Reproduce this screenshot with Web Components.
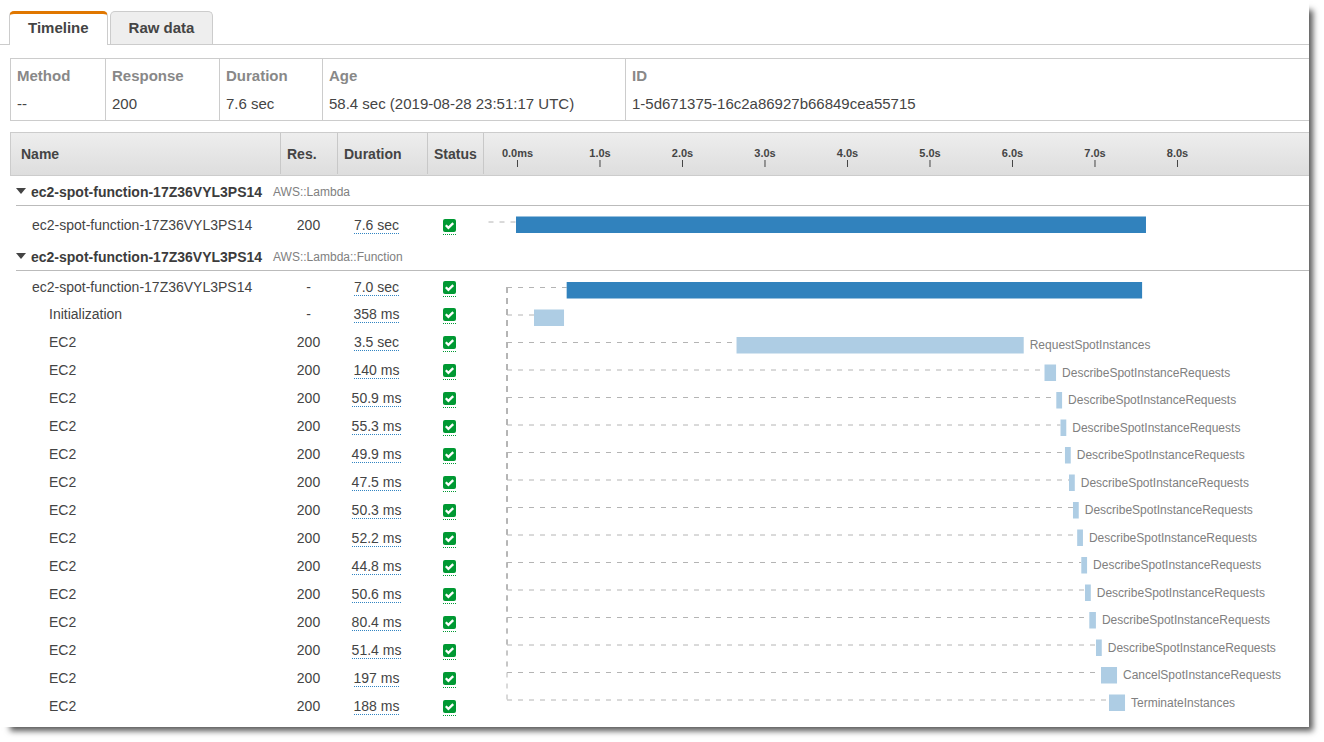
<!DOCTYPE html>
<html lang="en">
<head>
<meta charset="utf-8">
<title>Trace timeline</title>
<style>
  body { margin: 0; background: #fff; color: #444; font-family: "Liberation Sans", Arial, sans-serif; font-size: 14px; line-height: 16px; }
</style>
</head>
<body>
<trace-panel>
  <tab-strip>
    <tab-item selected>Timeline</tab-item>
    <tab-item>Raw data</tab-item>
  </tab-strip>
  <trace-summary></trace-summary>
  <trace-timeline></trace-timeline>
</trace-panel>

<script>
const shadow = (el, html) => { el.attachShadow({ mode: "open" }).innerHTML = html; return el.shadowRoot; };

customElements.define("trace-panel", class extends HTMLElement {
  constructor() {
    super();
    shadow(this, `<style>
      :host { display: block; margin: 0 15px 15px 0; padding: 11px 0 7px; background: #fff;
              box-shadow: 7px 7px 6px -3px rgba(0,0,0,.65); }
    </style><slot></slot>`);
  }
});

customElements.define("tab-strip", class extends HTMLElement {
  constructor() {
    super();
    shadow(this, `<style>
      :host { display: flex; gap: 2px; padding-left: 9px; height: 33px; border-bottom: 1px solid #ccc; }
    </style><slot></slot>`);
    this.setAttribute("role", "tablist");
    this.addEventListener("click", e => {
      const hit = e.target.closest("tab-item");
      if (hit) for (const t of this.children) t.toggleAttribute("selected", t === hit);
    });
  }
});

customElements.define("tab-item", class extends HTMLElement {
  static observedAttributes = ["selected"];
  constructor() {
    super();
    shadow(this, `<style>
      :host { display: block; }
      button { box-sizing: border-box; height: 33px; margin: 0; padding: 0 18px; display: block; font: bold 15px/16px "Liberation Sans", Arial, sans-serif;
               color: #444; background: #eee; border: 1px solid #ccc; border-bottom: 0; border-radius: 5px 5px 0 0; cursor: pointer; }
      :host([selected]) button { height: 34px; background: #fff; border-top: 3px solid #e07700; padding: 0 18px 4px; }
    </style><button role="tab"><slot></slot></button>`);
  }
  attributeChangedCallback() {
    this.shadowRoot.querySelector("button").setAttribute("aria-selected", this.hasAttribute("selected"));
  }
});

customElements.define("trace-summary", class extends HTMLElement {
  constructor() {
    super();
    shadow(this, `<style>
      :host { display: block; margin: 13px 0 11px 10px; border: 1px solid #ccc; border-right: 0; }
      table { width: 100%; table-layout: fixed; border-collapse: separate; border-spacing: 0; font-size: 15px; line-height: 17px; }
      th, td { box-sizing: border-box; text-align: left; padding: 0 6px; border-right: 1px solid #ccc; white-space: nowrap; }
      th:last-child, td:last-child { border-right: 0; }
      th { color: #888; padding-top: 8px; }
      td { padding-top: 11px; padding-bottom: 8px; }
      .method { width: 95px; } .response { width: 114px; } .duration { width: 103px; } .age { width: 303px; }
    </style>
    <table>
      <colgroup><col class="method"><col class="response"><col class="duration"><col class="age"><col></colgroup>
      <thead><tr><th scope="col">Method</th><th scope="col">Response</th><th scope="col">Duration</th><th scope="col">Age</th><th scope="col">ID</th></tr></thead>
      <tbody><tr><td>--</td><td>200</td><td>7.6 sec</td><td>58.4 sec (2019-08-28 23:51:17 UTC)</td><td>1-5d671375-16c2a86927b66849cea55715</td></tr></tbody>
    </table>`);
  }
});

customElements.define("status-ok", class extends HTMLElement {
  constructor() {
    super();
    shadow(this, `<style>
      :host { display: inline-block; vertical-align: top; margin-top: 2px; padding-bottom: 2px; border-bottom: 1px dotted #093; }
      svg { display: block; }
    </style>
    <svg width="13" height="13" viewBox="0 0 13 13" role="img" aria-label="OK">
      <rect width="13" height="13" rx="2" fill="#093"/>
      <path d="M2.8 6.3 5.4 8.9 10.2 4.1" fill="none" stroke="#fff" stroke-width="2.3"/>
    </svg>`);
  }
});

/* Horizontal scale of the chart: 4% of the width lies before zero, one second takes 10%. */
const at = s => (4 + s * 10) + "%";

customElements.define("time-axis", class extends HTMLElement {
  constructor() {
    super();
    let marks = "";
    for (let s = 0; s <= 8; s++) {
      const x = at(s + .006);
      marks += `<text x="${x}" y="24" text-anchor="middle">${s ? s + ".0s" : "0.0ms"}</text>
                <line x1="${x}" x2="${x}" y1="27" y2="34"/>`;
    }
    shadow(this, `<style>
      :host { display: block; }
      svg { display: block; width: 100%; height: 42px; }
      text { font: bold 11px "Liberation Sans", Arial, sans-serif; fill: #444; }
      line { stroke: #444; }
    </style><svg>${marks}</svg>`);
  }
});

/* Spans arrive as [start, length, kind, label]; every lane is 27.5 units high. */
customElements.define("span-chart", class extends HTMLElement {
  set spans(list) {
    const root = this.hasAttribute("root");
    const lane = 55 / 2, first = root ? 16 : 16.5, left = root ? 4.5 : 23, top = root ? 10.5 : 11;
    let out = "";
    list.forEach(([start, length, kind, label], i) => {
      const y = first + i * lane;
      if (i) out += `<line x1="${left}" x2="${left}" y1="${first}" y2="${y}"/>`;
      out += `<line x1="${left}" x2="${at(start)}" y1="${y}" y2="${y}"/>
              <rect class="${kind}" x="${at(start)}" y="${top + i * lane}" width="${length * 10}%" height="16.5"/>`;
      if (label) out += `<text x="${at(start + length)}" dx="6" y="${Math.round(top + i * lane + 12)}">${label}</text>`;
    });
    this.shadowRoot.querySelector("svg").innerHTML = out;
  }
  constructor() {
    super();
    shadow(this, `<style>
      :host { display: block; }
      svg { display: block; width: 100%; height: 449px; }
      :host([root]) svg { height: 35px; }
      line { stroke: #b4b4b4; stroke-dasharray: 5 6; }
      .main { fill: #3182bd; } .sub { fill: #aecde4; }
      text { font: 12px "Liberation Sans", Arial, sans-serif; fill: #808080; }
    </style><svg></svg>`);
  }
});

customElements.define("group-title", class extends HTMLElement {
  constructor() {
    super();
    shadow(this, `<style>
      :host { display: flex; align-items: center; gap: 11px; height: 30px; padding-top: 2px; box-sizing: border-box; margin-left: 6px; border-bottom: 1px solid #bbb; }
      button { display: flex; align-items: center; gap: 5px; border: 0; margin: 0; padding: 0; background: none; font: bold 14px/16px "Liberation Sans", Arial, sans-serif; color: #3c3c3c; cursor: pointer; }
      svg { margin-bottom: 2px; }
      .type { font-size: 12px; color: #808080; }
    </style>
    <button aria-expanded="true"><svg width="10" height="6" aria-hidden="true"><path d="M0 0H10L5 6Z" fill="#444"/></svg><slot></slot></button>
    <span class="type"><slot name="type"></slot></span>`);
  }
});

customElements.define("trace-timeline", class extends HTMLElement {
  constructor() {
    super();
    const fn = "ec2-spot-function-17Z36VYL3PS14", d = "DescribeSpotInstanceRequests";
    const rows = [
      [fn, "-", "7.0 sec", .602, 6.975],
      ["Initialization", "-", "358 ms", .206, .364],
      ["EC2", 200, "3.5 sec", 2.661, 3.481, "RequestSpotInstances"],
      ["EC2", 200, "140 ms", 6.394, .14, d],
      ["EC2", 200, "50.9 ms", 6.537, .07, d],
      ["EC2", 200, "55.3 ms", 6.588, .07, d],
      ["EC2", 200, "49.9 ms", 6.642, .07, d],
      ["EC2", 200, "47.5 ms", 6.691, .07, d],
      ["EC2", 200, "50.3 ms", 6.739, .07, d],
      ["EC2", 200, "52.2 ms", 6.79, .07, d],
      ["EC2", 200, "44.8 ms", 6.84, .07, d],
      ["EC2", 200, "50.6 ms", 6.885, .07, d],
      ["EC2", 200, "80.4 ms", 6.937, .08, d],
      ["EC2", 200, "51.4 ms", 7.018, .07, d],
      ["EC2", 200, "197 ms", 7.079, .194, "CancelSpotInstanceRequests"],
      ["EC2", 200, "188 ms", 7.176, .194, "TerminateInstances"]
    ];
    const cells = (name, res, dur) => `<td class="name">${name}</td><td class="res">${res}</td>
      <td class="dur"><span>${dur}</span></td><td class="status"><status-ok></status-ok></td>`;
    const group = type => `<tr><td class="group" colspan="5"><group-title>${fn}<span slot="type">${type}</span></group-title></td></tr>`;
    const root = shadow(this, `<style>
      :host { display: block; margin-left: 10px; }
      table { width: 100%; table-layout: fixed; border-collapse: separate; border-spacing: 0; }
      td, th { padding: 0; text-align: left; vertical-align: top; white-space: nowrap; }
      .c-name { width: 271px; } .c-res { width: 57px; } .c-dur { width: 90px; } .c-status { width: 56px; }
      thead tr { background: linear-gradient(#eee, #ddd); }
      th { border: solid #ccc; border-width: 1px 0; }
      th:first-child { border-left-width: 1px; }
      th div { box-sizing: border-box; height: 41px; line-height: 43px; padding-left: 6px; border-right: 1px solid #c8c8c8; }
      th:first-child div { padding-left: 10px; }
      tr { --top: 6px; height: 28px; }
      tr.lead { --top: 8px; height: 29px; }
      tr.root { --top: 11px; height: 35px; }
      .name, .res, .dur, .status { padding-top: var(--top); }
      .name { padding-left: 39px; }
      .lead .name, .root .name { padding-left: 22px; }
      .res { text-align: center; padding-right: 2px; }
      .dur, .status { text-align: center; padding-right: 13px; }
      .dur span { display: inline-block; border-bottom: 1px dotted #3184c2; }
    </style>
    <table>
      <colgroup><col class="c-name"><col class="c-res"><col class="c-dur"><col class="c-status"><col></colgroup>
      <thead><tr><th scope="col"><div>Name</div></th><th scope="col"><div>Res.</div></th><th scope="col"><div>Duration</div></th>
        <th scope="col"><div>Status</div></th><th scope="col"><time-axis></time-axis></th></tr></thead>
      <tbody>
        ${group("AWS::Lambda")}
        <tr class="root">${cells(fn, 200, "7.6 sec")}<td><span-chart root></span-chart></td></tr>
      </tbody>
      <tbody>
        ${group("AWS::Lambda::Function")}
        ${rows.map((r, i) => `<tr class="${i ? "" : "lead"}">${cells(...r)}${i ? "" : `<td rowspan="${rows.length}"><span-chart></span-chart></td>`}</tr>`).join("")}
      </tbody>
    </table>`);
    const charts = root.querySelectorAll("span-chart");
    charts[0].spans = [[-.012, 7.636, "main"]];
    charts[1].spans = rows.map((r, i) => [r[3], r[4], i ? "sub" : "main", r[5]]);
  }
});
</script>
</body>
</html>
